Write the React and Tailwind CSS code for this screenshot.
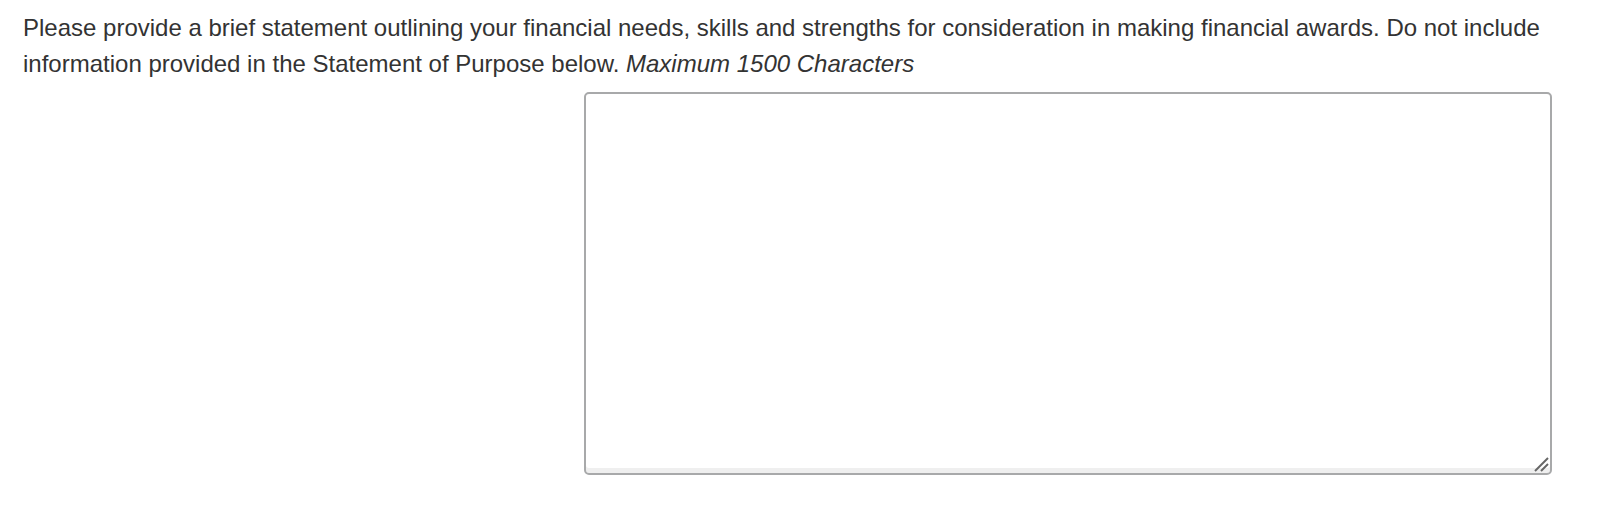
export default function App() {
  return (
    <div className="bg-white w-[1622px] h-[516px] pl-[23px] pr-[30px] pt-[10px]" style={{ fontFamily: '"Liberation Sans", Arial, sans-serif' }}>
      <p className="text-[24px] leading-[36px] text-[#333333]">
        Please provide a brief statement outlining your financial needs, skills and strengths for consideration in making financial awards. Do not include information provided in the Statement of Purpose below. <em>Maximum 1500 Characters</em>
      </p>
      <div className="relative mt-[10px] ml-[561px] w-[968px]">
        <textarea className="block w-full h-[383px] rounded-[5px] border-2 border-[#a8a9aa] bg-white shadow-[inset_0_-5px_0_#efefef] outline-none resize-none p-2 text-[24px]" />
        <svg className="absolute right-[2px] bottom-[2px] pointer-events-none" width="16" height="16" viewBox="0 0 16 16">
          <line x1="1" y1="14" x2="14" y2="1" stroke="#666666" strokeWidth="2" />
          <line x1="7" y1="14" x2="14" y2="7" stroke="#666666" strokeWidth="2" />
        </svg>
      </div>
    </div>
  );
}
